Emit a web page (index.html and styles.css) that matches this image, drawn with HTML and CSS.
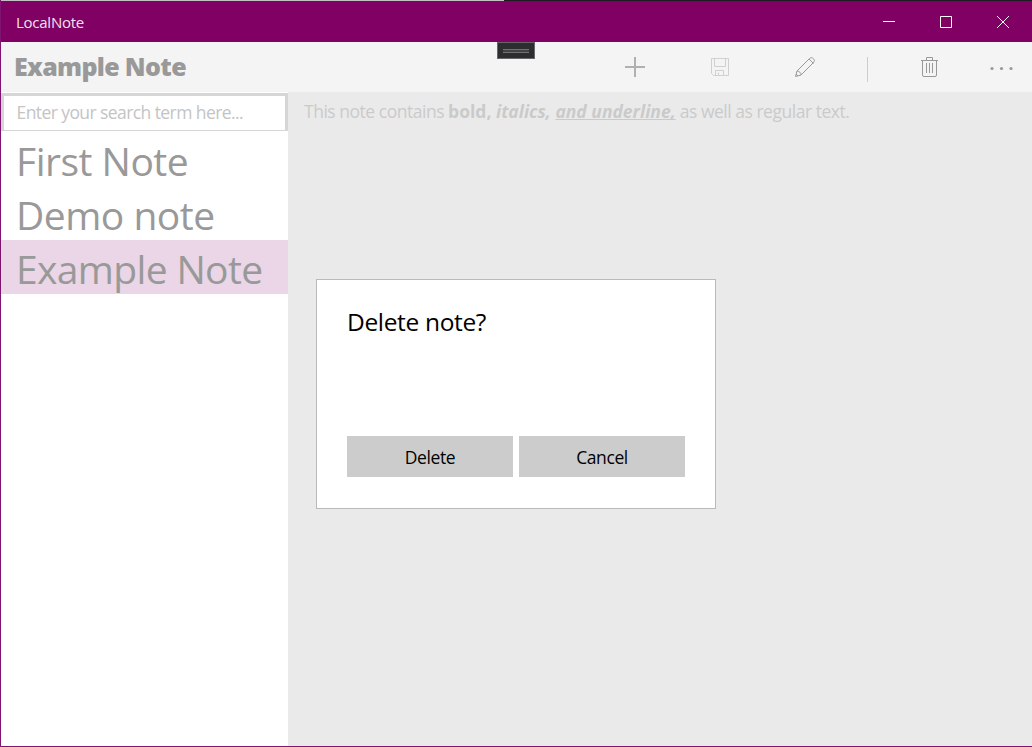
FILE: index.html
```html
<!DOCTYPE html>
<html lang="en">
<head>
<meta charset="utf-8">
<title>LocalNote</title>
<link rel="stylesheet" href="styles.css">
</head>
<body>
<div class="window">
  <header class="titlebar">
    <span class="app-name">LocalNote</span>
    <div class="caption-buttons">
      <svg width="57" height="41" viewBox="0 0 57 41"><path d="M23 20.5h12"/></svg>
      <svg width="57" height="41" viewBox="0 0 57 41"><path d="M23.5 15.5h11v11h-11z"/></svg>
      <svg width="57" height="41" viewBox="0 0 57 41"><path d="M23 15l12 12M35 15L23 27"/></svg>
    </div>
  </header>
  <div class="debug-tab"><i></i></div>
  <div class="toolbar">
    <h1 class="note-title">Example Note</h1>
    <div class="commands">
      <svg class="cmd" width="85" height="50" viewBox="0 0 85 50"><path d="M33 25h20M43 15v20" stroke="#b0b0b0" stroke-width="2"/></svg>
      <svg class="cmd cmd-off" width="85" height="50" viewBox="0 0 85 50"><path d="M34.5 16.5h17v17h-15l-2-2zM37.5 16.5v8h11v-8M38.5 33.5v-5h8v5M41.5 33.5v-3"/></svg>
      <svg class="cmd" width="85" height="50" viewBox="0 0 85 50"><path d="M33.5 34.500l1.500-5.500L47.500 16.500c2.500-2.500 6.500 1.500 4 4L39 33zM35 29c2 0 4.500 2 4 4M47 17l4.500 4.500M36 34l-2-2"/></svg>
      <span class="divider"></span>
      <svg class="cmd" width="85" height="50" viewBox="0 0 85 50"><path d="M21 18.5h17M26.5 18v-2.500h6v2.500M22.5 19v14q0 1.500 1.500 1.500h11q1.500 0 1.500-1.500v-14M26.5 21v10M29.5 21v10M32.5 21v10"/></svg>
      <svg class="more" width="40" height="50" viewBox="0 0 40 50"><circle cx="7" cy="26.5" r="1.600"/><circle cx="16.5" cy="26.5" r="1.600"/><circle cx="26" cy="26.5" r="1.600"/></svg>
    </div>
  </div>
  <main class="content">
    <aside class="sidebar">
      <div class="search">Enter your search term here...</div>
      <ul class="notes">
        <li>First Note</li>
        <li>Demo note</li>
        <li class="selected">Example Note</li>
      </ul>
    </aside>
    <article class="editor"><span>This note contains </span><b>bold, <em>italics, <u>and underline,</u></em></b><span> as well as regular text.</span></article>
  </main>
  <section class="dialog">
    <h2>Delete note?</h2>
    <div class="actions">
      <button type="button">Delete</button>
      <button type="button">Cancel</button>
    </div>
  </section>
</div>
</body>
</html>
```
FILE: styles.css
```css
* { box-sizing: border-box; }
body { margin: 0; font-family: "Open Sans", "Noto Sans", sans-serif; }
.window {
  position: relative;
  width: 1032px;
  height: 747px;
  display: flex;
  flex-direction: column;
  border-left: 1px solid #7f1571;
  border-bottom: 1px solid #7f1571;
  background: #fff;
}
.titlebar {
  height: 42px;
  display: flex;
  justify-content: space-between;
  background: linear-gradient(90deg, #c2c0c4 503px, #1e1a22 503px) top / 100% 1px no-repeat #800063;
  padding: 1px 1px 0 0;
  color: #f2e2ef;
}
.app-name { padding-left: 15px; font-size: 15px; line-height: 43px; letter-spacing: -0.25px; }
.caption-buttons { display: flex; }
.caption-buttons svg { fill: none; stroke: #fff; }
.debug-tab {
  position: absolute;
  left: 496px;
  top: 42px;
  width: 38px;
  height: 17px;
  padding: 6px 5px;
  background: #2d2d30;
  border: 1px solid #66666a;
}
.debug-tab i { display: block; height: 4px; background: #424245; border: solid #717171; border-width: 1px 0; }
.toolbar {
  height: 50px;
  display: flex;
  justify-content: space-between;
  padding-right: 7px;
  background: #f4f4f4;
}
.note-title { margin: 0; padding-left: 13px; font-size: 25px; font-weight: 800; line-height: 49px; letter-spacing: -0.66px; color: #999; white-space: nowrap; }
.commands { display: flex; }
.cmd { fill: none; stroke: #999; }
.cmd-off { stroke: #d0d0d0; }
.divider { width: 1px; height: 25px; margin: 15px 32px 0 20px; background: #ccc; }
.more { fill: #999; }
.content { flex: 1; display: flex; }
.sidebar { width: 287px; padding-top: 1px; background: #fff; }
.search {
  height: 38px;
  border: solid #d6d6d6;
  border-width: 3px 3px 1px 3px;
  padding-left: 12.5px;
  font-size: 17.5px;
  line-height: 32px;
  letter-spacing: -0.58px;
  color: #c4c4c4;
  white-space: nowrap;
}
.notes { margin: 1px 0 0; padding: 0; list-style: none; }
.notes li { height: 54px; padding-left: 15px; font-size: 39px; line-height: 58px; letter-spacing: -0.5px; color: #999; white-space: nowrap; }
.notes .selected { background: #ead6e6; letter-spacing: -0.65px; }
.editor { flex: 1; background: #eaeaea; padding: 2px 0 0 16px; font-size: 17.5px; line-height: 34px; color: #cacaca; white-space: pre; }
.editor span { letter-spacing: -0.48px; }
.editor u { text-underline-offset: 1px; text-decoration-skip-ink: none; }
.dialog {
  position: absolute;
  left: 315px;
  top: 279px;
  width: 400px;
  height: 230px;
  padding: 22px 30px 31px;
  display: flex;
  flex-direction: column;
  justify-content: space-between;
  background: #fff;
  border: 1px solid #bababa;
}
.dialog h2 { margin: 0; font-size: 24.5px; font-weight: 400; line-height: 40px; letter-spacing: -0.34px; color: #000; }
.actions { display: flex; gap: 6px; }
.actions button { flex: 1; height: 41px; padding: 0; border: 0; background: #ccc; font: 17.5px/43px "Open Sans", sans-serif; letter-spacing: -0.4px; color: #000; }
```
